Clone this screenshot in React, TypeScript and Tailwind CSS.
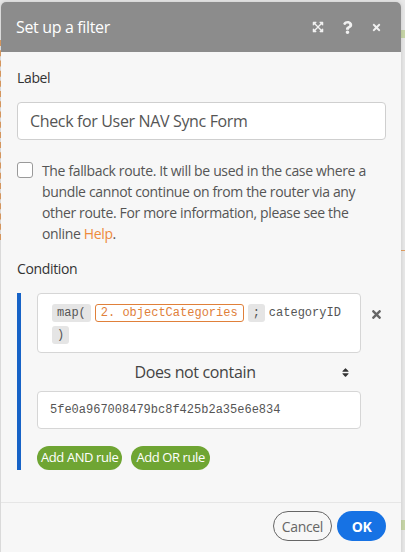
import { FaExpandArrowsAlt, FaQuestion, FaTimes, FaSort } from 'react-icons/fa';

const sans = { fontFamily: '"Open Sans", "Noto Sans", sans-serif' };

function Token({ children, kind }: { children: React.ReactNode; kind?: 'var' }) {
  if (kind === 'var') {
    return (
      <span className="inline-flex items-center h-[18px] px-[5px] mr-[4px] rounded-[3px] border border-[#e0803a] text-[#e0803a] bg-white">
        {children}
      </span>
    );
  }
  return (
    <span className="inline-flex items-center h-[18px] px-[5px] mr-[4px] rounded-[3px] bg-[#e5e5e5] text-[#555]">
      {children}
    </span>
  );
}

export default function App() {
  return (
    <div className="w-[405px] h-[552px] overflow-hidden bg-[#e8e8e8] relative tracking-[-0.35px]" style={sans}>
      {/* canvas bits behind the dialog */}
      <div className="absolute left-0 top-[40px] w-[2px] h-[200px] border-l-2 border-dashed border-[#e3a063]" />
      <div className="absolute right-0 top-[250px] w-[4px] h-0 border-t border-[#e3a063]" />
      <div className="absolute right-0 top-[30px] w-[4px] h-[8px] bg-[#c8d6a8]" />
      <div className="absolute right-0 top-[520px] w-[4px] h-[10px] bg-[#c8d6a8]" />

      <div className="absolute left-[1px] top-[2px] w-[400px] h-[560px] rounded-t-[5px] overflow-hidden bg-[#f7f7f7] shadow-[0_0_4px_rgba(0,0,0,0.15)] flex flex-col">
        {/* header */}
        <div className="h-[50px] bg-[#8c8c8c] flex items-center pl-[15px] pr-[19px]">
          <div className="flex-1 text-white text-[16px]">Set up a filter</div>
          <div className="flex items-center gap-[17px] text-[#f1f1f1]">
            <FaExpandArrowsAlt size={12} />
            <FaQuestion size={13} />
            <FaTimes size={11} />
          </div>
        </div>

        {/* body */}
        <div className="px-[16px] pt-[16px]">
          <div className="text-[14px] leading-[20px] text-[#333]">Label</div>
          <div className="mt-[14px] h-[38px] w-[369px] bg-white border border-[#cfcfcf] rounded-[4px] flex items-center px-[12px] text-[16px] text-[#555]">
            Check for User NAV Sync Form
          </div>

          <div className="mt-[20px] flex gap-[9px]">
            <div className="mt-[2px] w-[16px] h-[16px] shrink-0 bg-white border border-[#9a9a9a] rounded-[3px]" />
            <p className="text-[14px] leading-[21px] text-[#555] w-[332px]">
              The fallback route. It will be used in the case where a bundle cannot continue on from the router via any
              other route. For more information, please see the online <span className="text-[#ee8a3c]">Help</span>.
            </p>
          </div>

          <div className="mt-[15px] text-[14px] leading-[20px] text-[#333]">Condition</div>

          <div className="mt-[14px] flex border-l-[4px] border-[#1763c7] pl-[16px]">
            <div className="w-[324px]">
              <div className="bg-white border border-[#d6d6d6] rounded-[4px] px-[14px] pt-[10px] pb-[8px] h-[60px] font-['Liberation_Mono',monospace] tracking-normal text-[12px] text-[#555]">
                <div className="flex items-center h-[18px]">
                  <Token>map(</Token>
                  <Token kind="var">2. objectCategories</Token>
                  <Token>;</Token>
                  <span className="text-[#555]">categoryID</span>
                </div>
                <div className="flex items-center h-[18px] mt-[4px]">
                  <Token>)</Token>
                </div>
              </div>

              <div className="h-[38px] flex items-center relative">
                <div className="flex-1 text-center text-[16px] text-[#444] pr-[8px]">Does not contain</div>
                <FaSort size={11} className="absolute right-[10px] text-[#333]" />
              </div>

              <div className="h-[38px] bg-white border border-[#d6d6d6] rounded-[4px] flex items-center px-[12px] font-['Liberation_Mono',monospace] tracking-normal text-[12px] text-[#555]">
                5fe0a967008479bc8f425b2a35e6e834
              </div>

              <div className="mt-[17px] flex gap-[9px]">
                <button className="h-[24px] px-[4px] rounded-full bg-[#6fa533] text-white text-[13px] tracking-[-0.4px]">Add AND rule</button>
                <button className="h-[24px] px-[5px] rounded-full bg-[#6fa533] text-white text-[13px] tracking-[-0.4px]">Add OR rule</button>
              </div>
            </div>
            <FaTimes size={13} className="ml-[9px] mt-[15px] text-[#666]" />
          </div>
        </div>

        <div className="mt-[32px] border-t border-[#e6e6e6]" />
        <div className="flex justify-end gap-[5px] px-[15px] pt-[8px]">
          <button className="h-[30px] px-[8px] rounded-full border border-[#666] text-[#666] text-[14px]">Cancel</button>
          <button className="h-[30px] w-[49px] rounded-full bg-[#1672e4] text-white text-[14px] font-bold">OK</button>
        </div>
      </div>
    </div>
  );
}
